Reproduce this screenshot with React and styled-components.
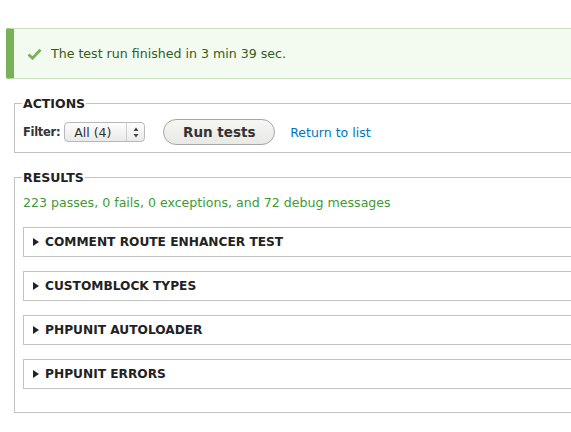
import React from "react";
import styled, { createGlobalStyle } from "styled-components";

const Global = createGlobalStyle`
  html, body { margin: 0; padding: 0; background: #fff; overflow: hidden; }
  body { font-family: "DejaVu Sans", Verdana, sans-serif; color: #222; }
  #root { width: 640px; }
`;

const Page = styled.div`
  padding: 28px 0 0 6px;
`;

const Message = styled.div`
  display: flex;
  align-items: center;
  gap: 9px;
  box-sizing: border-box;
  height: 51px;
  padding-left: 13px;
  background: #f3faef;
  border: 1px solid #c9e1bd;
  border-left: 8px solid #77b259;
  border-radius: 2px 0 0 2px;
  color: #325e1c;
  font-size: 12.6px;
`;

const Fieldset = styled.fieldset`
  margin: ${(p) => p.$top}px 0 0 8px;
  padding: 0 0 ${(p) => p.$bottom}px 8px;
  border: 1px solid #c3c3c3;
  min-width: 0;
`;

const Legend = styled.legend`
  padding: 0 1px;
  margin-left: -1px;
  font-size: 12.5px;
  font-weight: bold;
  text-transform: uppercase;
  color: #222;
`;

const ActionsRow = styled.div`
  display: flex;
  align-items: center;
  margin-top: 8px;
`;

const Label = styled.span`
  font-weight: bold;
  font-size: 11.5px;
  color: #333;
  margin-right: 4px;
  letter-spacing: -0.3px;
`;

const Select = styled.div`
  display: flex;
  align-items: stretch;
  width: 81px;
  height: 20px;
  box-sizing: border-box;
  border: 1px solid #b8b8b8;
  border-radius: 4px;
  background: linear-gradient(#fdfdfd, #e9e9e9);
  font-size: 12.5px;
  color: #333;
`;

const SelectValue = styled.span`
  flex: 1;
  display: flex;
  align-items: center;
  padding-left: 9px;
`;

const SelectArrow = styled.span`
  width: 17px;
  border-left: 1px solid #cfcfcf;
  display: flex;
  align-items: center;
  justify-content: center;
`;

const Button = styled.button`
  margin-left: 18px;
  width: 112px;
  height: 26px;
  border: 1px solid #a6a6a6;
  border-radius: 13px;
  background: linear-gradient(#f6f6f3, #e8e8e4);
  font-family: inherit;
  font-size: 13.5px;
  font-weight: bold;
  color: #333;
  padding: 0;
`;

const Link = styled.a`
  margin-left: 15px;
  color: #0074bd;
  text-decoration: none;
  font-size: 12.5px;
`;

const Summary = styled.div`
  margin-top: 10px;
  color: #3d9b35;
  font-size: 12.6px;
`;

const DetailsList = styled.div`
  display: flex;
  flex-direction: column;
  gap: 14px;
  margin-top: 17px;
`;

const Details = styled.div`
  height: 30px;
  box-sizing: border-box;
  border: 1px solid #c3c3c3;
  display: flex;
  align-items: center;
  padding-left: 9px;
  gap: 6px;
  font-size: 12.2px;
  font-weight: bold;
  text-transform: uppercase;
  color: #222;
`;

const Triangle = styled.span`
  width: 0;
  height: 0;
  border-top: 4px solid transparent;
  border-bottom: 4px solid transparent;
  border-left: 6px solid #222;
`;

const Check = () => (
  <svg width="15" height="12" viewBox="0 0 15 12">
    <path d="M1.5 6.5 L5.5 10.2 L13.5 1.8" fill="none" stroke="#77b259" strokeWidth="2.8" />
  </svg>
);

const Arrows = () => (
  <svg width="6" height="11" viewBox="0 0 6 11">
    <path d="M3 0.5 L5.5 4 L0.5 4 Z M3 10.5 L5.5 7 L0.5 7 Z" fill="#444" />
  </svg>
);

const groups = [
  "Comment route enhancer test",
  "Customblock types",
  "PHPUnit autoloader",
  "PHPUnit errors",
];

export default function App() {
  return (
    <>
      <Global />
      <Page>
        <Message>
          <Check />
          <span>The test run finished in 3 min 39 sec.</span>
        </Message>
        <Fieldset $top={17} $bottom={7}>
          <Legend>Actions</Legend>
          <ActionsRow>
            <Label>Filter:</Label>
            <Select>
              <SelectValue>All (4)</SelectValue>
              <SelectArrow>
                <Arrows />
              </SelectArrow>
            </Select>
            <Button>Run tests</Button>
            <Link href="#">Return to list</Link>
          </ActionsRow>
        </Fieldset>
        <Fieldset $top={17} $bottom={23}>
          <Legend>Results</Legend>
          <Summary>223 passes, 0 fails, 0 exceptions, and 72 debug messages</Summary>
          <DetailsList>
            {groups.map((g) => (
              <Details key={g}>
                <Triangle />
                <span>{g}</span>
              </Details>
            ))}
          </DetailsList>
        </Fieldset>
      </Page>
    </>
  );
}
